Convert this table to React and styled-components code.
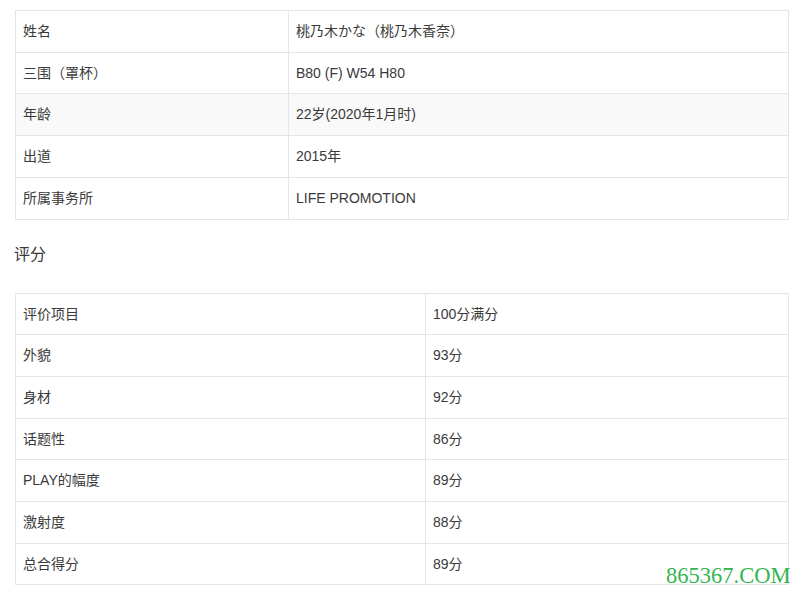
import React from 'react'
import styled, { createGlobalStyle } from 'styled-components'

const profile = [
    ['姓名', '桃乃木かな（桃乃木香奈）'],
    ['三围（罩杯）', 'B80 (F) W54 H80'],
    ['年龄', '22岁(2020年1月时)'],
    ['出道', '2015年'],
    ['所属事务所', 'LIFE PROMOTION'],
];

const scores = [
    ['评价项目', '100分满分'],
    ['外貌', '93分'],
    ['身材', '92分'],
    ['话题性', '86分'],
    ['PLAY的幅度', '89分'],
    ['激射度', '88分'],
    ['总合得分', '89分'],
];

function InfoTable({ rows, firstCol, stripe }) {
    return (
        <Table>
            <colgroup>
                <col style={{ width: firstCol }} />
                <col />
            </colgroup>
            <tbody>
                {rows.map(([k, v], i) => (
                    <Row key={k} $shade={stripe && stripe.includes(i)}>
                        <Cell>{k}</Cell>
                        <Cell>{v}</Cell>
                    </Row>
                ))}
            </tbody>
        </Table>
    )
}

function App() {
    return (
        <Page>
            <GlobalStyle />
            <InfoTable rows={profile} firstCol={273} stripe={[2]} />
            <Heading>评分</Heading>
            <InfoTable rows={scores} firstCol={410} />
            <Watermark>865367.COM</Watermark>
        </Page>
    )
}

export default App

const GlobalStyle = createGlobalStyle`
    body {
        margin: 0;
        background: #fff;
        font-family: "Liberation Sans", "Noto Sans CJK SC", sans-serif;
    }
`;

const Page = styled.div`
    position: relative;
    width: 800px;
    height: 593px;
    box-sizing: border-box;
    padding: 10px 11px 0 15px;
    overflow: hidden;
`;

const Table = styled.table`
    width: 774px;
    border-collapse: collapse;
    table-layout: fixed;
    border: 1px solid #e5e5e5;
`;

const Row = styled.tr`
    background: ${p => (p.$shade ? '#f9f9f9' : '#fff')};
`;

const Cell = styled.td`
    border: 1px solid #e5e5e5;
    padding: 8px 8px 8px 7px;
    font-size: 14px;
    line-height: 24.7px;
    color: #3a3a3a;
    text-align: left;
    vertical-align: middle;
`;

const Heading = styled.div`
    margin: 23px 0 26px -1px;
    font-size: 16px;
    line-height: 24px;
    color: #3a3a3a;
`;

const Watermark = styled.div`
    position: absolute;
    left: 666px;
    top: 562px;
    font-family: "Liberation Serif", "DejaVu Serif", serif;
    font-size: 22.5px;
    line-height: 27px;
    color: #33b54f;
`;
